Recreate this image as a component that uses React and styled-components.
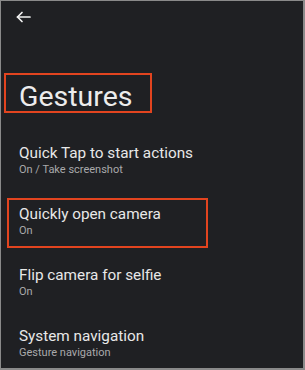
import React from 'react';
import styled, { createGlobalStyle } from 'styled-components';

const GlobalStyle = createGlobalStyle`
  html, body {
    margin: 0;
    padding: 0;
    background: #1f2023;
  }
`

const Screen = styled.div`
  box-sizing: border-box;
  width: 305px;
  height: 370px;
  background: #1f2023;
  border: 1px solid #8a8a8a;
  border-right-width: 2px;
  border-bottom-width: 2px;
  font-family: Roboto, "Open Sans", sans-serif;
  color: #e6e6e6;
  overflow: hidden;
`

const TopBar = styled.div`
  height: 31px;
  display: flex;
  align-items: center;
  padding-left: 14px;
`

const BackButton = styled.button`
  display: grid;
  place-items: center;
  width: 16px;
  height: 16px;
  padding: 0;
  border: 0;
  background: none;
  color: #f2f2f2;
`

const TitleBox = styled.div`
  box-sizing: border-box;
  width: 148px;
  height: 40px;
  margin: 41px 0 0 3px;
  padding: 5px 0 0 13px;
  border: 2px solid #e2441f;
`

const Title = styled.h1`
  margin: 0;
  font-size: 28.5px;
  line-height: 33px;
  font-weight: 400;
  color: #ececec;
`

const List = styled.ul`
  list-style: none;
  margin: 24px 0 0;
  padding: 0;
  display: grid;
  gap: 11px;
`

const Item = styled.li`
  box-sizing: border-box;
  width: 201px;
  height: 50px;
  margin-left: 6px;
  padding: 4px 0 0 10px;
  border: 2px solid ${p => (p.$marked ? '#e2441f' : 'transparent')};
  display: flex;
  flex-direction: column;
`

const ItemTitle = styled.span`
  font-size: 15.3px;
  line-height: 20px;
  color: #e8e8e8;
  white-space: nowrap;
`

const ItemSub = styled.span`
  font-size: 11px;
  line-height: 14px;
  color: #a9a9ab;
  white-space: nowrap;
`

function BackIcon() {
  return (
    <svg width="15" height="12" viewBox="0 0 15 12" fill="none" stroke="currentColor" strokeWidth="1.7" strokeLinecap="round" strokeLinejoin="round">
      <path d="M1.5 6H14" />
      <path d="M6 1.5L1.5 6L6 10.5" />
    </svg>
  )
}

const items = [
  { title: 'Quick Tap to start actions', sub: 'On / Take screenshot' },
  { title: 'Quickly open camera', sub: 'On', marked: true },
  { title: 'Flip camera for selfie', sub: 'On' },
  { title: 'System navigation', sub: 'Gesture navigation' },
]

export default function App() {
  return (
    <>
      <GlobalStyle />
      <Screen>
        <TopBar>
          <BackButton aria-label="Back"><BackIcon /></BackButton>
        </TopBar>
        <TitleBox>
          <Title>Gestures</Title>
        </TitleBox>
        <List>
          {items.map(item => (
            <Item key={item.title} $marked={item.marked}>
              <ItemTitle>{item.title}</ItemTitle>
              <ItemSub>{item.sub}</ItemSub>
            </Item>
          ))}
        </List>
      </Screen>
    </>
  )
}
